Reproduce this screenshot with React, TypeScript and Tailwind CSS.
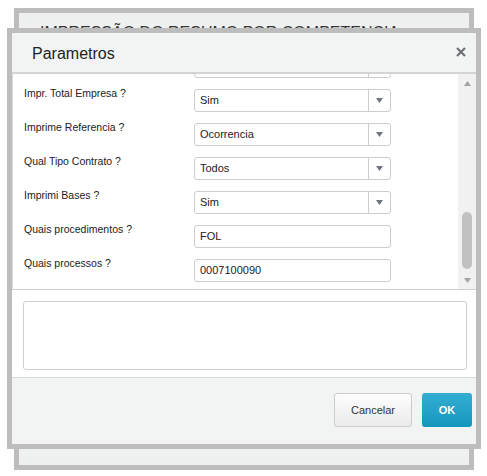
import React from 'react';

const rows = [
  { label: '', value: '', select: true },
  { label: 'Impr. Total Empresa ?', value: 'Sim', select: true },
  { label: 'Imprime Referencia ?', value: 'Ocorrencia', select: true },
  { label: 'Qual Tipo Contrato ?', value: 'Todos', select: true },
  { label: 'Imprimi Bases ?', value: 'Sim', select: true },
  { label: 'Quais procedimentos ?', value: 'FOL', select: false },
  { label: 'Quais processos ?', value: '0007100090', select: false },
];

const Caret = () => (
  <svg width="7" height="5" viewBox="0 0 7 5">
    <path d="M0 0 L7 0 L3.5 5 Z" fill="#6f7480" />
  </svg>
);

const Field = ({ value, select }: { value: string; select: boolean }) => (
  <div className="mt-[3px] h-[23px] w-[197px] flex items-stretch bg-white border border-[#cdcdcd] rounded-[3px] text-[11px] text-[#222]">
    <div className="flex-1 flex items-center pl-[5px]">{value}</div>
    {select && (
      <div className="w-[22px] border-l border-[#cdcdcd] flex items-center justify-center">
        <Caret />
      </div>
    )}
  </div>
);

const App = () => {
  return (
    <div className="relative w-[487px] h-[476px] bg-white font-['Liberation_Sans',Arial,sans-serif] overflow-hidden">
      {/* Back window */}
      <div className="absolute left-[14px] top-[8px] w-[460px] h-[462px] border-[5px] border-[#bdbdbd] bg-[#eff0f0]">
        <div className="flex items-start justify-between pt-[12px] pl-[21px] pr-[15px] text-[16px] leading-[16px] text-[#333]">
          <span>IMPRESSÃO DO RESUMO POR COMPETENCIA</span>
          <span className="text-[#666] font-bold">×</span>
        </div>
      </div>

      {/* Front window */}
      <div className="absolute left-[7px] top-[28px] w-[474px] h-[421px] border-[5px] border-[#bdbdbd] bg-white flex flex-col">
        {/* Header */}
        <div className="h-[41px] shrink-0 bg-[#f2f3f3] border-b-2 border-[#d3d4d4] flex items-center justify-between pl-[20px] pr-[10px]">
          <span className="text-[16px] text-[#222] pt-[2px]">Parametros</span>
          <svg width="10" height="10" viewBox="0 0 10 10" className="mb-[2px]">
            <path d="M1 1 L9 9 M9 1 L1 9" stroke="#6a6d72" strokeWidth="2" />
          </svg>
        </div>

        {/* Scroll area */}
        <div className="h-[216px] shrink-0 flex border-b border-[#cfcfcf] border-l border-l-[#dadada]">
          <div className="flex-1 overflow-hidden pl-[11px]">
            <div className="mt-[-22px]">
              {rows.map((r, i) => (
                <div key={i} className="h-[34px] flex items-start">
                  <div className="w-[170px] text-[10.5px] leading-[14px] text-[#222]">{r.label}</div>
                  <Field value={r.value} select={r.select} />
                </div>
              ))}
            </div>
          </div>
          <div className="w-[18px] bg-[#f1f1f1] flex flex-col items-center pt-[7px]">
            <svg width="7" height="5" viewBox="0 0 7 5">
              <path d="M0 5 L7 5 L3.5 0 Z" fill="#a3a3a3" />
            </svg>
            <div className="mt-[126px] w-[10px] h-[57px] rounded-full bg-[#c1c1c1]" />
            <svg width="7" height="5" viewBox="0 0 7 5" className="mt-[9px]">
              <path d="M0 0 L7 0 L3.5 5 Z" fill="#a3a3a3" />
            </svg>
          </div>
        </div>

        {/* Text area */}
        <div className="h-[87px] shrink-0 pt-[11px] pl-[11px] pr-[9px]">
          <div className="h-[69px] border border-[#d0d0d0] rounded-[3px] bg-white" />
        </div>

        {/* Footer */}
        <div className="flex-1 bg-[#f2f3f3] border-t border-[#d8d8d8] flex items-start justify-end gap-[10px] pt-[15px] pr-[4px]">
          <button className="w-[78px] h-[34px] rounded-[3px] border border-[#cccccc] bg-gradient-to-b from-[#fdfdfd] to-[#ebebeb] text-[11px] text-[#333]">
            Cancelar
          </button>
          <button className="w-[50px] h-[34px] rounded-[3px] bg-gradient-to-b from-[#33aed2] to-[#1396bd] text-[11px] font-bold text-white">
            OK
          </button>
        </div>
      </div>
    </div>
  );
};

export default App;
